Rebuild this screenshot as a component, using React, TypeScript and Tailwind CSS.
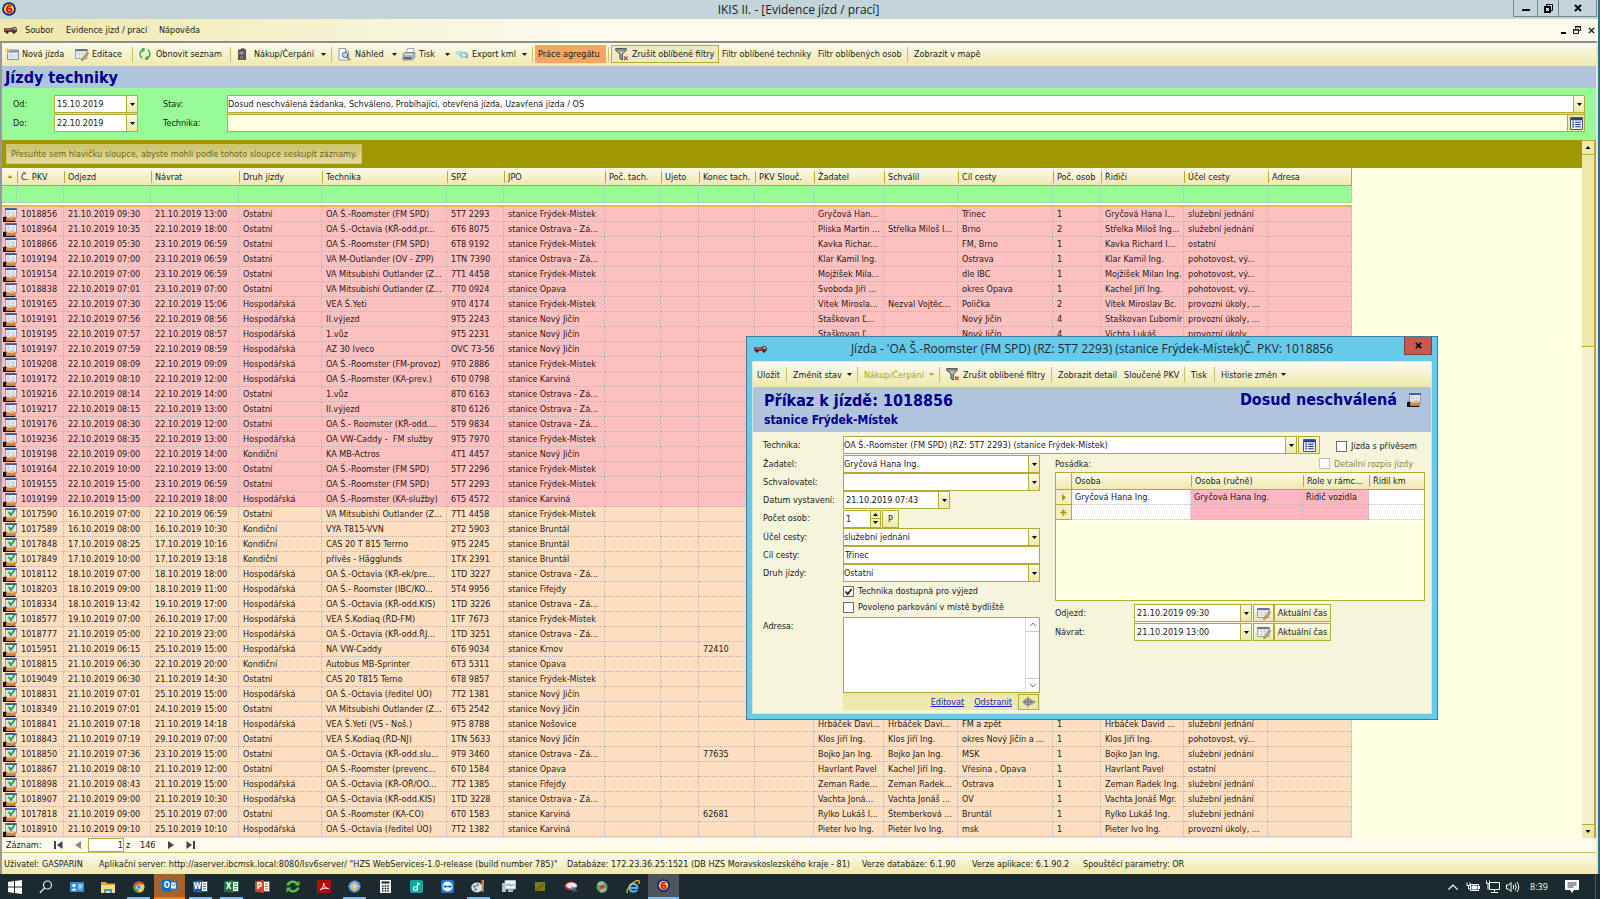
import type { ReactNode } from 'react'

type Row = string[]

const PINK_ROWS = 20

const columns = [
  { title: 'Č. PKV', width: 'w-[47px]' },
  { title: 'Odjezd', width: 'w-[87px]' },
  { title: 'Návrat', width: 'w-[88px]' },
  { title: 'Druh jízdy', width: 'w-[83px]' },
  { title: 'Technika', width: 'w-[125px]' },
  { title: 'SPZ', width: 'w-[57px]' },
  { title: 'JPO', width: 'w-[101px]' },
  { title: 'Poč. tach.', width: 'w-[56px]' },
  { title: 'Ujeto', width: 'w-[38px]' },
  { title: 'Konec tach.', width: 'w-[56px]' },
  { title: 'PKV Slouč.', width: 'w-[59px]' },
  { title: 'Žadatel', width: 'w-[70px]' },
  { title: 'Schválil', width: 'w-[74px]' },
  { title: 'Cíl cesty', width: 'w-[95px]' },
  { title: 'Poč. osob', width: 'w-[48px]' },
  { title: 'Řidiči', width: 'w-[83px]' },
  { title: 'Účel cesty', width: 'w-[84px]' },
  { title: 'Adresa', width: 'w-[84px]' },
]

// pkv, odjezd, návrat, druh, technika, spz, jpo, konec tach., žadatel, schválil, cíl, osob, řidiči, účel
const rows: Row[] = [
  ['1018856', '21.10.2019 09:30', '21.10.2019 13:00', 'Ostatní', 'OA Š.-Roomster (FM SPD)', '5T7 2293', 'stanice Frýdek-Místek', '', 'Gryčová Han...', '', 'Třinec', '1', 'Gryčová Hana I...', 'služební jednání'],
  ['1018964', '21.10.2019 10:35', '22.10.2019 18:00', 'Ostatní', 'OA Š.-Octavia (KŘ-odd.pr...', '6T6 8075', 'stanice Ostrava - Zá...', '', 'Pliska Martin ...', 'Střelka Miloš I...', 'Brno', '2', 'Střelka Miloš Ing...', 'služební jednání'],
  ['1018866', '22.10.2019 05:30', '23.10.2019 06:59', 'Ostatní', 'OA Š.-Roomster (FM SPD)', '6T8 9192', 'stanice Frýdek-Místek', '', 'Kavka Richar...', '', 'FM, Brno', '1', 'Kavka Richard I...', 'ostatní'],
  ['1019194', '22.10.2019 07:00', '23.10.2019 06:59', 'Ostatní', 'VA M-Outlander (OV - ZPP)', '1TN 7390', 'stanice Ostrava - Zá...', '', 'Klar Kamil Ing.', '', 'Ostrava', '1', 'Klar Kamil Ing.', 'pohotovost, vý...'],
  ['1019154', '22.10.2019 07:00', '23.10.2019 06:59', 'Ostatní', 'VA Mitsubishi Outlander (Z...', '7T1 4458', 'stanice Frýdek-Místek', '', 'Mojžíšek Mila...', '', 'dle IBC', '1', 'Mojžíšek Milan Ing.', 'pohotovost, vý...'],
  ['1018838', '22.10.2019 07:01', '23.10.2019 07:00', 'Ostatní', 'VA Mitsubishi Outlander (Z...', '7T0 0924', 'stanice Opava', '', 'Svoboda Jiří ...', '', 'okres Opava', '1', 'Kachel Jiří Ing.', 'pohotovost, vý...'],
  ['1019165', '22.10.2019 07:30', '22.10.2019 15:06', 'Hospodářská', 'VEA Š.Yeti', '9T0 4174', 'stanice Frýdek-Místek', '', 'Vítek Mirosla...', 'Nezval Vojtěc...', 'Polička', '2', 'Vítek Miroslav Bc.', 'provozní úkoly, ...'],
  ['1019191', '22.10.2019 07:56', '22.10.2019 08:56', 'Hospodářská', 'II.výjezd', '9T5 2243', 'stanice Nový Jičín', '', 'Staškovan Ľ...', '', 'Nový Jičín', '4', 'Staškovan Ľubomír', 'provozní úkoly, ...'],
  ['1019195', '22.10.2019 07:57', '22.10.2019 08:57', 'Hospodářská', '1.vůz', '9T5 2231', 'stanice Nový Jičín', '', 'Staškovan Ľ...', '', 'Nový Jičín', '4', 'Vichta Lukáš', 'provozní úkoly, ...'],
  ['1019197', '22.10.2019 07:59', '22.10.2019 08:59', 'Hospodářská', 'AZ 30 Iveco', 'OVC 73-56', 'stanice Nový Jičín'],
  ['1019208', '22.10.2019 08:09', '22.10.2019 09:09', 'Hospodářská', 'OA Š.-Roomster (FM-provoz)', '9T0 2886', 'stanice Frýdek-Místek'],
  ['1019172', '22.10.2019 08:10', '22.10.2019 12:00', 'Hospodářská', 'OA Š.-Roomster (KA-prev.)', '6T0 0798', 'stanice Karviná'],
  ['1019216', '22.10.2019 08:14', '22.10.2019 14:00', 'Ostatní', '1.vůz', '8T0 6163', 'stanice Ostrava - Zá...'],
  ['1019217', '22.10.2019 08:15', '22.10.2019 13:00', 'Ostatní', 'II.výjezd', '8T0 6126', 'stanice Ostrava - Zá...'],
  ['1019176', '22.10.2019 08:30', '22.10.2019 12:00', 'Ostatní', 'OA Š.- Roomster (KŘ-odd....', '5T9 9834', 'stanice Ostrava - Zá...'],
  ['1019236', '22.10.2019 08:35', '22.10.2019 13:00', 'Hospodářská', 'OA VW-Caddy -  FM služby', '9T5 7970', 'stanice Frýdek-Místek'],
  ['1019198', '22.10.2019 09:00', '22.10.2019 14:00', 'Kondiční', 'KA MB-Actros', '4T1 4457', 'stanice Nový Jičín'],
  ['1019164', '22.10.2019 10:00', '22.10.2019 13:00', 'Ostatní', 'OA Š.-Roomster (FM SPD)', '5T7 2296', 'stanice Frýdek-Místek'],
  ['1019155', '22.10.2019 15:00', '23.10.2019 06:59', 'Ostatní', 'OA Š.-Roomster (FM SPD)', '5T7 2293', 'stanice Frýdek-Místek'],
  ['1019199', '22.10.2019 15:00', '22.10.2019 18:00', 'Hospodářská', 'OA Š.-Roomster (KA-služby)', '6T5 4572', 'stanice Karviná'],
  ['1017590', '16.10.2019 07:00', '22.10.2019 06:59', 'Ostatní', 'VA Mitsubishi Outlander (Z...', '7T1 4458', 'stanice Frýdek-Místek'],
  ['1017589', '16.10.2019 08:00', '16.10.2019 10:30', 'Kondiční', 'VYA T815-VVN', '2T2 5903', 'stanice Bruntál'],
  ['1017848', '17.10.2019 08:25', '17.10.2019 10:16', 'Kondiční', 'CAS 20 T 815 Terrno', '9T5 2245', 'stanice Bruntál'],
  ['1017849', '17.10.2019 10:00', '17.10.2019 13:18', 'Kondiční', 'přívěs - Hägglunds', '1TX 2391', 'stanice Bruntál'],
  ['1018112', '18.10.2019 07:00', '18.10.2019 18:00', 'Hospodářská', 'OA Š.-Octavia (KŘ-ek/pre...', '1TD 3227', 'stanice Ostrava - Zá...'],
  ['1018203', '18.10.2019 09:00', '18.10.2019 11:00', 'Hospodářská', 'OA Š.- Roomster (IBC/KO...', '5T4 9956', 'stanice Fifejdy'],
  ['1018334', '18.10.2019 13:42', '19.10.2019 17:00', 'Hospodářská', 'OA Š.-Octavia (KŘ-odd.KIS)', '1TD 3226', 'stanice Ostrava - Zá...'],
  ['1018577', '19.10.2019 07:00', '26.10.2019 17:00', 'Hospodářská', 'VEA Š.Kodiaq (ŘD-FM)', '1TF 7673', 'stanice Frýdek-Místek'],
  ['1018777', '21.10.2019 05:00', '22.10.2019 23:00', 'Hospodářská', 'OA Š.-Octavia (KŘ-odd.ŘJ...', '1TD 3251', 'stanice Ostrava - Zá...'],
  ['1015951', '21.10.2019 06:15', '25.10.2019 15:00', 'Hospodářská', 'NA VW-Caddy', '6T6 9034', 'stanice Krnov', '72410'],
  ['1018815', '21.10.2019 06:30', '22.10.2019 20:00', 'Kondiční', 'Autobus MB-Sprinter', '6T3 5311', 'stanice Opava'],
  ['1019049', '21.10.2019 06:30', '21.10.2019 14:30', 'Ostatní', 'CAS 20 T815 Terno', '6T8 9857', 'stanice Frýdek-Místek'],
  ['1018831', '21.10.2019 07:01', '25.10.2019 15:00', 'Hospodářská', 'OA Š.-Octavia (ředitel ÚO)', '7T2 1381', 'stanice Nový Jičín'],
  ['1018349', '21.10.2019 07:01', '24.10.2019 15:00', 'Ostatní', 'VA Mitsubishi Outlander (Z...', '6T5 2542', 'stanice Nový Jičín'],
  ['1018841', '21.10.2019 07:18', '21.10.2019 14:18', 'Hospodářská', 'VEA Š.Yeti (VS - Noš.)', '9T5 8788', 'stanice Nošovice', '', 'Hrbáček Davi...', 'Hrbáček Davi...', 'FM a zpět', '1', 'Hrbáček David ...', 'služební jednání'],
  ['1018843', '21.10.2019 07:19', '29.10.2019 07:00', 'Ostatní', 'VEA Š.Kodiaq (ŘD-NJ)', '1TN 5633', 'stanice Nový Jičín', '', 'Klos Jiří Ing.', 'Klos Jiří Ing.', 'okres Nový Jičín a ...', '1', 'Klos Jiří Ing.', 'pohotovost, vý...'],
  ['1018850', '21.10.2019 07:36', '23.10.2019 15:00', 'Ostatní', 'OA Š.-Octavia (KŘ-odd.slu...', '9T9 3460', 'stanice Ostrava - Zá...', '77635', 'Bojko Jan Ing.', 'Bojko Jan Ing.', 'MSK', '1', 'Bojko Jan Ing.', 'služební jednání'],
  ['1018867', '21.10.2019 08:10', '21.10.2019 12:00', 'Ostatní', 'OA Š.-Roomster (prevenc...', '6T0 1584', 'stanice Opava', '', 'Havrlant Pavel', 'Kachel Jiří Ing.', 'Vřesina , Opava', '1', 'Havrlant Pavel', 'ostatní'],
  ['1018898', '21.10.2019 08:43', '21.10.2019 15:00', 'Hospodářská', 'OA Š.-Octavia (KŘ-OŘ/OO...', '7T2 1385', 'stanice Fifejdy', '', 'Zeman Rade...', 'Zeman Radek...', 'Ostrava', '1', 'Zeman Radek Ing.', 'služební jednání'],
  ['1018907', '21.10.2019 09:00', '21.10.2019 10:30', 'Hospodářská', 'OA Š.-Octavia (KŘ-odd.KIS)', '1TD 3228', 'stanice Ostrava - Zá...', '', 'Vachta Joná...', 'Vachta Jonáš ...', 'OV', '1', 'Vachta Jonáš Mgr.', 'služební jednání'],
  ['1017818', '21.10.2019 09:00', '25.10.2019 07:00', 'Ostatní', 'OA Š.-Roomster (KA-CO)', '6T0 1583', 'stanice Karviná', '62681', 'Rylko Lukáš I...', 'Štemberková ...', 'Bruntál', '1', 'Rylko Lukáš Ing.', 'služební jednání'],
  ['1018910', '21.10.2019 09:10', '25.10.2019 10:10', 'Hospodářská', 'OA Š.-Octavia (ředitel ÚO)', '7T2 1382', 'stanice Karviná', '', 'Pieter Ivo Ing.', 'Pieter Ivo Ing.', 'msk', '1', 'Pieter Ivo Ing.', 'provozní úkoly, ...'],
]

// the grid shows four columns (tach., ujeto, sloučení, adresa) that are always empty
function toCells(row: Row) {
  const v = (i: number) => row[i] ?? ''
  return [v(0), v(1), v(2), v(3), v(4), v(5), v(6), '', '', v(7), '', v(8), v(9), v(10), v(11), v(12), v(13), '']
}

/* ---------- icons ---------- */

function LogoIcon({ className = 'size-[14px]' }: { className?: string }) {
  return (
    <svg viewBox="0 0 14 14" className={className}>
      <circle cx="7" cy="7" r="6.8" fill="#10208a" />
      <circle cx="7" cy="7" r="5" fill="#ffe11a" />
      <path d="M9.200 4.200C7 2.800 4.800 4 4.800 7.200C4.800 11.200 9.500 10.800 9.400 8.300C9.300 6.100 6 6 5.200 8" fill="none" stroke="#d8171c" strokeWidth="2" />
    </svg>
  )
}

function TruckIcon() {
  return (
    <svg viewBox="0 0 13 8" className="h-2 w-[13px]">
      <path d="M0 2h8l1-1h3l1 2v3H0z" fill="#6d4547" />
      <path d="M1 2.500h6v1.500H1z" fill="#b2666a" />
      <path d="M9.500 2h2.200v1.500H9.500z" fill="#c8d0d4" />
      <circle cx="3" cy="6.300" r="1.400" fill="#2b2325" />
      <circle cx="10" cy="6.300" r="1.400" fill="#2b2325" />
    </svg>
  )
}

function RowIcon({ checked }: { checked?: boolean }) {
  return (
    <svg viewBox="0 0 14 14" className="size-[14px]">
      <path d="M2.500 .5h11v9.500h-11z" fill="#eceff3" stroke="#7f8898" strokeWidth=".8" />
      <path d="M2.200 .2h11.500v1.800H2.200z" fill="#39599f" />
      <path d="M4 2.500h3v6H4z" fill="#d3d9e4" />
      <path d="M8 4h4M8 5.700h4M8 7.400h4" stroke="#b9bfcb" strokeWidth=".7" />
      {checked && <path d="M5.800 3.800l2 3.200 4-5.500" fill="none" stroke="#17a52c" strokeWidth="1.800" />}
      <path d="M0 9l3.500-.5v4H13l-1 1.500H0z" fill="#12151c" />
      <path d="M3 10.500L8 8.300l5.500.7-1.500 3.200-3 .5H3z" fill="#d9843a" />
      <path d="M4 9.800l4-1 4.500.5-4 1z" fill="#f3bd85" />
    </svg>
  )
}

function NewIcon() {
  return (
    <svg viewBox="0 0 14 12" className="h-3 w-[14px]">
      <path d="M2.500 2h11v9.500h-11z" fill="#f6f8fa" stroke="#7f8da5" />
      <path d="M3 2.500h10v2H3z" fill="#6b86b8" />
      <path d="M6 4.500v7M3 7h10M3 9h10" stroke="#b7c2d3" strokeWidth=".8" />
      <path d="M2.500 0v5.500M0 2.700h5.500M.7.800l3.800 3.800M4.500.800L.700 4.600" stroke="#f0c344" strokeWidth=".9" />
    </svg>
  )
}

function EditIcon() {
  return (
    <svg viewBox="0 0 14 13" className="h-[13px] w-[14px]">
      <path d="M.5 1.500h11.500v9H.5z" fill="#f5f6f8" stroke="#9a9dae" />
      <path d="M.5 1h12v2.200H.5z" fill="#6f7190" />
      <path d="M1 5.500h11M1 8h11M4.500 3v7.500M8 3v7.500" stroke="#c3c6d0" strokeWidth=".7" />
      <path d="M12.500 4l1.200 1-5.200 7-2 .8.500-2z" fill="#d9b45a" stroke="#6e603b" strokeWidth=".6" />
    </svg>
  )
}

function RefreshIcon() {
  return (
    <svg viewBox="0 0 12 12" className="size-3" fill="none" stroke="#2fa84a" strokeWidth="1.500">
      <path d="M4.500 1.500C1.500 3 .800 5 1.200 7.200c.3 1.300 1 2.200 2.200 2.900M7.500 10.500C10.500 9 11.200 7 10.800 4.800c-.3-1.300-1-2.200-2.200-2.900" />
      <path d="M3 .5l2.200.8-1 2.200M9 11.500l-2.200-.8 1-2.200" />
    </svg>
  )
}

function PumpIcon() {
  return (
    <svg viewBox="0 0 10 13" className="h-[13px] w-[10px]">
      <path d="M1 2l5-2 3 1.500V12H1z" fill="#5a5654" />
      <path d="M2.500 3.500h4v3h-4z" fill="#9b9896" />
      <path d="M3 8l3 3M6 8l-3 3" stroke="#b98" strokeWidth=".8" />
      <circle cx="7.500" cy="2" r="1" fill="#b53b35" />
    </svg>
  )
}

function PreviewIcon() {
  return (
    <svg viewBox="0 0 13 13" className="size-[13px]">
      <path d="M1 .5h6.500l3 3V12H1z" fill="#fbfcfd" stroke="#8791a3" strokeWidth=".9" />
      <path d="M7.500.5v3h3" fill="#d8dfea" stroke="#8791a3" strokeWidth=".7" />
      <circle cx="7" cy="7" r="2.700" fill="#b9dcf2" stroke="#4a7196" />
      <path d="M9 9l3 3.200" stroke="#a0733e" strokeWidth="1.600" />
    </svg>
  )
}

function PrinterIcon() {
  return (
    <svg viewBox="0 0 14 13" className="h-[13px] w-[14px]">
      <path d="M4 5l1.500-4.500H12L10.500 5z" fill="#fff" stroke="#8a96a8" strokeWidth=".8" />
      <path d="M1 6l2.500-1.500H13L12.500 10 10 12H1z" fill="#a9b3bf" stroke="#6d7885" strokeWidth=".7" />
      <path d="M2 9h7.500v2H2z" fill="#5d6772" />
      <path d="M2.500 6.500h8" stroke="#eef1f4" />
    </svg>
  )
}

function EarthIcon() {
  return (
    <svg viewBox="0 0 14 10" className="h-[10px] w-[14px]">
      <ellipse cx="4.500" cy="4" rx="4.200" ry="2.600" fill="#b9e2e8" />
      <ellipse cx="9" cy="6" rx="4.200" ry="2.900" fill="#79c3dc" />
      <path d="M6 5q3-2 5 1t-3 2z" fill="#d9f1ea" />
      <path d="M10 7.500l3 1" stroke="#b77f76" strokeWidth="1.200" />
    </svg>
  )
}

function FunnelIcon() {
  return (
    <svg viewBox="0 0 14 13" className="h-[13px] w-[14px]">
      <path d="M.7.700h10.600v1.500L7.300 6v6L5 10.500V6L.700 2.200z" fill="#b9bcc0" stroke="#3b3b3b" strokeWidth="1" />
      <path d="M2 2.200h8" stroke="#4d4d4d" strokeWidth=".7" />
      <path d="M9 8.500l3.500 3.500M12.500 8.500L9 12" stroke="#b8402f" strokeWidth="1.100" />
    </svg>
  )
}

function ListIcon() {
  return (
    <svg viewBox="0 0 13 13" className="size-[13px]">
      <path d="M.5.500h12v12H.5z" fill="#eaf0fb" stroke="#4d5668" />
      <path d="M1 1h11v2.300H1z" fill="#24449b" />
      <path d="M2.300 5.200h1.700M2.300 7.500h1.700M2.300 9.800h1.700" stroke="#1b2f7d" strokeWidth="1.300" />
      <path d="M5.200 5.200h5.500M5.200 7.500h5.500M5.200 9.800h5.500" stroke="#1b2f7d" strokeWidth="1.100" />
    </svg>
  )
}

function TargetIcon() {
  return (
    <svg viewBox="0 0 14 12" className="h-3 w-[14px]">
      <path d="M0 6l3-3h6l5 3-4 3H3z" fill="#b3b3b3" />
      <circle cx="6" cy="6" r="3.300" fill="none" stroke="#7d7d7d" />
      <path d="M6 .8v10.400M1 6h12" stroke="#666" strokeWidth=".9" />
    </svg>
  )
}

function Triangle({ className = 'h-[3px] w-[5px] text-black' }: { className?: string }) {
  return (
    <svg viewBox="0 0 10 6" className={className}>
      <path d="M0 0h10L5 6z" fill="currentColor" />
    </svg>
  )
}

function TriangleUp({ className = 'h-[3px] w-[5px] text-black' }: { className?: string }) {
  return (
    <svg viewBox="0 0 10 6" className={className}>
      <path d="M0 6h10L5 0z" fill="currentColor" />
    </svg>
  )
}

/* ---------- small controls ---------- */

function ToolButton({ icon, children, className = '', arrow }: { icon?: ReactNode; children: ReactNode; className?: string; arrow?: boolean }) {
  return (
    <button className={`flex h-[18px] shrink-0 items-center whitespace-nowrap text-left ${className}`}>
      {icon && <span className="flex w-[17px] shrink-0 items-center">{icon}</span>}
      <span className="flex-1">{children}</span>
      {arrow && <Triangle className="mr-[5px] h-[3px] w-[5px]" />}
    </button>
  )
}

function Sep() {
  return <span className="mr-[6px] h-[15px] w-px shrink-0 bg-[#c9bf62]" />
}

function ArrowButton({ label }: { label: string }) {
  return (
    <button type="button" aria-label={label} className="flex w-[11px] shrink-0 items-center justify-center border-l border-[#b5ab33] bg-linear-to-b from-[#fbfae8] to-[#eee8aa]">
      <Triangle />
    </button>
  )
}

function DateField({ id, value, className }: { id: string; value: string; className: string }) {
  return (
    <div className={`flex h-[18px] border border-[#b5ab33] bg-white ${className}`}>
      <input id={id} defaultValue={value} className="min-w-0 flex-1 px-[2px] text-[9px] outline-none" />
      <ArrowButton label="Otevřít kalendář" />
    </div>
  )
}

function Combo({ id, value, className = '' }: { id: string; value: string; className?: string }) {
  return (
    <div className={`relative flex h-[18px] border border-[#b5ab33] bg-white ${className}`}>
      <select id={id} className="min-w-0 flex-1 appearance-none text-[9px] leading-[14px] outline-none">
        <option>{value}</option>
      </select>
      <span className="pointer-events-none absolute inset-y-0 right-0 flex w-[11px] items-center justify-center border-l border-[#b5ab33] bg-linear-to-b from-[#fbfae8] to-[#eee8aa]">
        <Triangle />
      </span>
    </div>
  )
}

function CheckBox({ id, label, checked, disabled, className = '' }: { id: string; label: string; checked?: boolean; disabled?: boolean; className?: string }) {
  return (
    <div className={`flex h-4 items-center gap-1 ${className}`}>
      <span className="relative flex size-[11px]">
        <input
          id={id}
          type="checkbox"
          defaultChecked={checked}
          disabled={disabled}
          className={`size-[11px] appearance-none border bg-white ${disabled ? 'border-[#c4c0a4]' : 'border-[#6d6d6d]'}`}
        />
        {checked && (
          <svg viewBox="0 0 11 11" className="pointer-events-none absolute inset-0" fill="none" stroke="#222" strokeWidth="1.800">
            <path d="M2.500 5.500l2.200 2.500 4-5" />
          </svg>
        )}
      </span>
      <label htmlFor={id} className={disabled ? 'text-[#8b8640]' : ''}>{label}</label>
    </div>
  )
}

/* ---------- main window ---------- */

function TitleBar() {
  return (
    <div className="flex h-[19px] shrink-0 items-start bg-[#c3d5da]">
      <span className="flex w-[84px] pt-[2px] pl-[2px]"><LogoIcon /></span>
      <h1 className="flex-1 text-center font-['Open_Sans','Noto_Sans',sans-serif] text-[12px] leading-[19px] text-[#222]">IKIS II. - [Evidence jízd / prací]</h1>
      <div className="mr-px flex h-[17px] border border-t-0 border-[#76868c]">
        <button aria-label="Minimalizovat" className="flex w-6 items-center justify-center border-r border-[#76868c]">
          <span className="mt-1 h-[2px] w-2 bg-black" />
        </button>
        <button aria-label="Obnovit" className="flex w-[21px] items-center justify-center border-r border-[#76868c]">
          <svg viewBox="0 0 9 9" className="size-[9px]" fill="none" stroke="#000"><path d="M2.500 2V.5h6v6H7" /><path d="M1 3h5v5H1z" strokeWidth="2" /></svg>
        </button>
        <button aria-label="Zavřít" className="flex w-[37px] items-center justify-center">
          <svg viewBox="0 0 8 8" className="size-2" stroke="#000" strokeWidth="2"><path d="M1 1l6 6M7 1L1 7" /></svg>
        </button>
      </div>
    </div>
  )
}

function MenuBar() {
  return (
    <nav className="flex h-[22px] shrink-0 items-center bg-linear-to-r from-[#eee8aa] to-[#fcfaec] to-35% pl-1">
      <span className="w-[21px]"><TruckIcon /></span>
      <button className="w-[41px] text-left">Soubor</button>
      <button className="w-[93px] whitespace-nowrap text-left">Evidence jízd / prací</button>
      <button className="text-left">Nápověda</button>
      <div className="ml-auto flex items-center gap-[7px] pr-[3px]">
        <button aria-label="Minimalizovat okno" className="flex h-2 items-end"><span className="h-[2px] w-[5px] bg-black" /></button>
        <button aria-label="Obnovit okno">
          <svg viewBox="0 0 8 8" className="size-2" fill="none" stroke="#111"><path d="M2.500 2.500v-2h5v4H6M2 1h6M.500 3.500h5v4h-5zM0 4h6" /></svg>
        </button>
        <button aria-label="Zavřít okno">
          <svg viewBox="0 0 8 8" className="size-[7px]" stroke="#111" strokeWidth="1.600"><path d="M1 1l6 6M7 1L1 7" /></svg>
        </button>
      </div>
    </nav>
  )
}

function Toolbar() {
  return (
    <div className="flex h-[23px] shrink-0 items-center overflow-hidden bg-linear-to-b from-[#fcfbee] to-[#eee8aa] pb-px pl-[3px]">
      <ToolButton icon={<NewIcon />} className="w-[70px]">Nová jízda</ToolButton>
      <ToolButton icon={<EditIcon />} className="w-[57px]">Editace</ToolButton>
      <Sep />
      <ToolButton icon={<RefreshIcon />} className="w-[91px]">Obnovit seznam</ToolButton>
      <Sep />
      <ToolButton icon={<PumpIcon />} className="w-[94px]" arrow>Nákup/Čerpání</ToolButton>
      <Sep />
      <ToolButton icon={<PreviewIcon />} className="w-[64px]" arrow>Náhled</ToolButton>
      <ToolButton icon={<PrinterIcon />} className="w-[53px]" arrow>Tisk</ToolButton>
      <ToolButton icon={<EarthIcon />} className="w-[77px]" arrow>Export kml</ToolButton>
      <span className="mr-[2px] h-[15px] w-px shrink-0 bg-[#c9bf62]" />
      <ToolButton className="w-[71px] bg-[#f6a562] pl-[3px]">Práce agregátu</ToolButton>
      <span className="mx-[2px] h-[15px] w-px shrink-0 bg-[#c9bf62]" />
      <ToolButton icon={<FunnelIcon />} className="w-[108px] border border-[#b5ab33] bg-[#efeac0] pl-[3px]">Zrušit oblíbené filtry</ToolButton>
      <ToolButton className="ml-[3px] w-[96px]">Filtr oblíbené techniky</ToolButton>
      <ToolButton className="w-[89px]">Filtr oblíbených osob</ToolButton>
      <Sep />
      <ToolButton>Zobrazit v mapě</ToolButton>
    </div>
  )
}

function Filters() {
  return (
    <form className="grid h-[52px] shrink-0 grid-cols-[41px_84px_25px_64px_1fr] content-start gap-y-px bg-[#98fb98] pt-[7px] pr-[11px] pl-[11px]">
      <label htmlFor="od" className="leading-[18px]">Od:</label>
      <DateField id="od" value="15.10.2019" className="w-[84px]" />
      <span />
      <label htmlFor="stav" className="leading-[18px]">Stav:</label>
      <Combo id="stav" value="Dosud neschválená žádanka, Schváleno, Probíhající, otevřená jízda, Uzavřená jízda / OS" />
      <label htmlFor="do" className="leading-[18px]">Do:</label>
      <DateField id="do" value="22.10.2019" className="w-[84px]" />
      <span />
      <label htmlFor="technika" className="leading-[18px]">Technika:</label>
      <div className="flex h-[18px] border border-[#b5ab33] bg-[#ffffe1]">
        <input id="technika" className="min-w-0 flex-1 px-[2px] text-[9px] outline-none" />
        <button type="button" aria-label="Vybrat techniku" className="flex w-[17px] items-center justify-center border-l border-[#b5ab33] bg-[#eee8aa]"><ListIcon /></button>
      </div>
    </form>
  )
}

function TripsTable() {
  return (
    <table className="w-[1350px] table-fixed border-separate border-spacing-0">
      <colgroup>
        <col className="w-[15px]" />
        {columns.map(c => <col key={c.title} className={c.width} />)}
      </colgroup>
      <thead>
        <tr className="h-[18px] bg-linear-to-b from-[#fbfae8] to-[#eee8aa]">
          <th className="border-b border-[#b5ab33]"><TriangleUp className="mx-auto h-[3px] w-[6px] text-[#a09800]" /></th>
          {columns.map(c => (
            <th key={c.title} className="overflow-hidden border-b border-[#b5ab33] p-0 text-left font-normal whitespace-nowrap last:border-r">
              <span className="block h-3 border-l border-[#b5ab33] pl-[3px] leading-3">{c.title}</span>
            </th>
          ))}
        </tr>
        <tr className="h-[17px] bg-[#98fb98]">
          <td className="border-r border-b border-dotted border-[#b9b9c4]" />
          {columns.map(c => <td key={c.title} className="border-r border-b border-dotted border-[#b9b9c4]" />)}
        </tr>
        <tr className="h-1">
          <td colSpan={19} className="border-b-2 border-[#d3bd5c] bg-[#fcfaec]" />
        </tr>
      </thead>
      <tbody>
        {rows.map((row, i) => (
          <tr key={row[0]} className={`h-[15px] ${i < PINK_ROWS ? 'bg-[#ffc0c0]' : 'bg-[#ffdfc0]'}`}>
            <td className="py-0 pr-0 pl-px"><RowIcon checked={i >= PINK_ROWS} /></td>
            {toCells(row).map((cell, n) => (
              <td key={n} className="overflow-hidden border-r border-b border-dotted border-[#b4b4c0] py-0 pr-0 pl-[4px] leading-[14px] whitespace-pre">{cell}</td>
            ))}
          </tr>
        ))}
        <tr className="h-[15px] bg-[#ffdfc0]"><td colSpan={19} /></tr>
      </tbody>
    </table>
  )
}

function Grid() {
  return (
    <div className="flex min-h-0 flex-1 bg-[#ffffe1]">
      <div className="flex min-w-0 flex-1 flex-col overflow-hidden">
        <div className="flex h-7 shrink-0 items-center bg-[#a09800] pl-1">
          <span className="h-5 border border-[#cfc878] bg-linear-to-b from-[#ccc468] to-[#e4dda0] px-1 leading-[18px] whitespace-nowrap text-[#69651c]">Přesuňte sem hlavičku sloupce, abyste mohli podle tohoto sloupce seskupit záznamy.</span>
        </div>
        <div className="min-h-0 flex-1 overflow-hidden"><TripsTable /></div>
      </div>
      <div className="flex w-[14px] shrink-0 flex-col border-r-2 border-[#b5ab33] bg-[#f5f1d0]">
        <button aria-label="Nahoru" className="flex h-[15px] items-center justify-center border-y border-[#b5ab33] bg-[#efe9b4]"><TriangleUp className="h-[3px] w-[6px] text-black" /></button>
        <span className="h-[192px] border-b border-[#b5ab33] bg-[#eee8aa]" />
        <span className="flex-1" />
        <button aria-label="Dolů" className="flex h-[14px] items-center justify-center border-t border-[#b5ab33] bg-[#eee8aa]"><Triangle className="h-[3px] w-[6px] text-black" /></button>
      </div>
    </div>
  )
}

function Navigator() {
  return (
    <div className="flex h-[15px] shrink-0 items-center border-b border-[#c8bf5c] bg-[#fcfaec] pb-px pl-1">
      <label htmlFor="zaznam" className="w-12">Záznam:</label>
      <button aria-label="První" className="flex w-[21px]"><svg viewBox="0 0 9 8" className="h-2 w-[9px]" fill="#444"><path d="M0 0h2v8H0zM8.500 0v8L3 4z" /></svg></button>
      <button aria-label="Předchozí" className="flex w-[13px]"><svg viewBox="0 0 6 8" className="h-2 w-[6px]" fill="#888"><path d="M6 0v8L0 4z" /></svg></button>
      <input id="zaznam" defaultValue="1" className="h-[14px] w-9 border border-[#b5ab33] bg-white text-right text-[9px] outline-none" />
      <span className="ml-[2px] w-[14px]">z</span>
      <span className="w-7">146</span>
      <button aria-label="Další" className="flex w-[18px]"><svg viewBox="0 0 6 8" className="h-2 w-[6px]" fill="#444"><path d="M0 0v8l6-4z" /></svg></button>
      <button aria-label="Poslední"><svg viewBox="0 0 9 8" className="h-2 w-[9px]" fill="#444"><path d="M.500 0v8L6 4zM7 0h2v8H7z" /></svg></button>
    </div>
  )
}

function StatusBar() {
  return (
    <footer className="flex h-[21px] shrink-0 items-center overflow-hidden bg-linear-to-b from-[#fcfaec] to-[#eee8aa] pt-px pl-[2px] whitespace-nowrap">
      <span className="w-[95px] shrink-0">Uživatel: GASPARIN</span>
      <span className="w-[468px] shrink-0">Aplikační server: http://aserver.ibcmsk.local:8080/Isv6server/ "HZS WebServices-1.0-release (build number 785)"</span>
      <span className="w-[295px] shrink-0">Databáze: 172.23.36.25:1521 (DB HZS Moravskoslezského kraje - 81)</span>
      <span className="w-[110px] shrink-0">Verze databáze: 6.1.90</span>
      <span className="w-[111px] shrink-0">Verze aplikace: 6.1.90.2</span>
      <span>Spouštěcí parametry: OR</span>
    </footer>
  )
}

/* ---------- trip dialog ---------- */

function CrewTable() {
  return (
    <div className="h-[129px] w-[370px] border border-[#b5ab33] bg-[#ffffe1]">
      <table className="w-full table-fixed border-separate border-spacing-0">
        <colgroup>
          <col className="w-4" />
          <col className="w-[119px]" />
          <col className="w-[112px]" />
          <col className="w-[66px]" />
          <col />
        </colgroup>
        <thead>
          <tr className="h-[17px] bg-linear-to-b from-[#fbfae8] to-[#eee8aa]">
            <th className="border-r border-b border-[#b5ab33]" />
            {['Osoba', 'Osoba (ručně)', 'Role v rámc...', 'Řídil km'].map((t, i) => (
              <th key={t} className="border-b border-[#b5ab33] p-0 text-left font-normal whitespace-nowrap">
                <span className={`block h-3 pl-[3px] leading-3 ${i > 0 ? 'border-l border-[#b5ab33]' : ''}`}>{t}</span>
              </th>
            ))}
          </tr>
        </thead>
        <tbody>
          <tr className="h-[15px] bg-white leading-[14px]">
            <td className="border-r border-b border-[#b5ab33] bg-[#f3efc4] p-0">
              <svg viewBox="0 0 4 7" className="mx-auto h-[7px] w-1" fill="#a09800"><path d="M0 0v7l4-3.500z" /></svg>
            </td>
            <td className="border-r border-b border-dotted border-[#bbb] py-0 pr-0 pl-[3px]">Gryčová Hana Ing.</td>
            <td className="border-r border-b border-dotted border-[#bbb] bg-[#ffb6c1] py-0 pr-0 pl-[3px]">Gryčová Hana Ing.</td>
            <td className="border-r border-b border-dotted border-[#bbb] bg-[#ffb6c1] py-0 pr-0 pl-[3px]">Řidič vozidla</td>
            <td className="border-b border-dotted border-[#bbb]" />
          </tr>
          <tr className="h-[15px] bg-white">
            <td className="border-r border-b border-[#b5ab33] bg-[#f3efc4] p-0">
              <svg viewBox="0 0 7 7" className="mx-auto size-[7px]" stroke="#a09800"><path d="M3.500 0v7M0 3.500h7M1.200 1.200l4.600 4.600M5.800 1.200L1.200 5.800" strokeWidth=".9" /></svg>
            </td>
            <td className="border-r border-b border-dotted border-[#bbb]" />
            <td className="border-r border-b border-dotted border-[#bbb] bg-[#ffb6c1]" />
            <td className="border-r border-b border-dotted border-[#bbb] bg-[#ffb6c1]" />
            <td className="border-b border-dotted border-[#bbb]" />
          </tr>
        </tbody>
      </table>
    </div>
  )
}

function TimeRow({ id, label, value }: { id: string; label: string; value: string }) {
  return (
    <div className="flex h-[18px] items-center">
      <label htmlFor={id} className="w-[79px]">{label}</label>
      <DateField id={id} value={value} className="w-[118px]" />
      <button type="button" aria-label={`Upravit ${label}`} className="ml-px flex h-[18px] w-[21px] items-center justify-center border border-[#b5ab33] bg-linear-to-b from-[#fbfae8] to-[#eee8aa]"><EditIcon /></button>
      <button type="button" className="h-[18px] w-[57px] border border-[#b5ab33] bg-linear-to-b from-[#fbfae8] to-[#eee8aa] whitespace-nowrap">Aktuální čas</button>
    </div>
  )
}

function TripForm() {
  return (
    <form className="flex px-[10px] pt-1">
      <div className="w-[292px] shrink-0">
        <div className="grid grid-cols-[80px_197px] items-center gap-y-px leading-[17px]">
          <label htmlFor="m-technika">Technika:</label>
          <div className="flex h-[18px] w-[480px]">
            <Combo id="m-technika" value="OA Š.-Roomster (FM SPD) (RZ: 5T7 2293) (stanice Frýdek-Místek)" className="w-[454px]" />
            <button type="button" aria-label="Vybrat" className="ml-px flex w-[22px] items-center justify-center border border-[#b5ab33] bg-linear-to-b from-[#fbfae8] to-[#eee8aa]"><ListIcon /></button>
          </div>
          <label htmlFor="m-zadatel">Žadatel:</label>
          <Combo id="m-zadatel" value="Gryčová Hana Ing." />
        </div>
        <div className="grid grid-cols-[80px_197px] items-center leading-[17px]">
          <label htmlFor="m-schval">Schvalovatel:</label>
          <Combo id="m-schval" value="" />
          <label htmlFor="m-datum" className="whitespace-nowrap">Datum vystavení:</label>
          <DateField id="m-datum" value="21.10.2019 07:43" className="w-[107px]" />
          <label htmlFor="m-pocet">Počet osob:</label>
          <div className="flex h-[19px] items-center">
            <input id="m-pocet" defaultValue="1" className="h-[18px] w-[28px] border border-[#b5ab33] bg-white px-[2px] text-[9px] outline-none" />
            <span className="flex h-[18px] w-[10px] flex-col border border-l-0 border-[#b5ab33] bg-[#f3efc4]">
              <button type="button" aria-label="Více" className="flex flex-1 items-center justify-center border-b border-[#b5ab33]"><TriangleUp /></button>
              <button type="button" aria-label="Méně" className="flex flex-1 items-center justify-center"><Triangle /></button>
            </span>
            <button type="button" className="ml-px h-[18px] w-[17px] border border-[#b5ab33] bg-linear-to-b from-[#fbfae8] to-[#eee8aa] leading-4">P</button>
          </div>
          <label htmlFor="m-ucel">Účel cesty:</label>
          <Combo id="m-ucel" value="služební jednání" />
          <label htmlFor="m-cil">Cíl cesty:</label>
          <input id="m-cil" defaultValue="Třinec" className="h-[18px] border border-[#b5ab33] bg-white px-px text-[9px] outline-none" />
          <label htmlFor="m-druh">Druh jízdy:</label>
          <Combo id="m-druh" value="Ostatní" />
        </div>
        <CheckBox id="m-dostupna" label="Technika dostupná pro výjezd" checked className="mt-px ml-20" />
        <CheckBox id="m-parkovani" label="Povoleno parkování v místě bydliště" className="ml-20 whitespace-nowrap" />
        <div className="mt-[2px] flex">
          <label htmlFor="m-adresa" className="w-20 pt-[3px]">Adresa:</label>
          <div className="w-[197px]">
            <div className="flex h-[76px] border border-[#b5ab33] bg-white">
              <textarea id="m-adresa" className="min-w-0 flex-1 resize-none text-[9px] outline-none" />
              <span className="flex w-[14px] flex-col justify-between border-l border-[#ddd] bg-white">
                <button type="button" aria-label="Nahoru" className="flex h-[14px] items-center justify-center border-b border-[#ccc]"><svg viewBox="0 0 8 5" className="h-[5px] w-2" fill="none" stroke="#777"><path d="M1 4.500L4 1l3 3.500" /></svg></button>
                <button type="button" aria-label="Dolů" className="flex h-[14px] items-center justify-center border-t border-[#ccc]"><svg viewBox="0 0 8 5" className="h-[5px] w-2" fill="none" stroke="#777"><path d="M1 .5L4 4l3-3.500" /></svg></button>
              </span>
            </div>
            <div className="flex h-[17px] items-center justify-end gap-[10px] bg-[#eee8aa] pr-px text-[#2020d0]">
              <a href="#" className="underline">Editovat</a>
              <a href="#" className="underline">Odstranit</a>
              <button type="button" aria-label="Najít na mapě" className="-ml-1 flex h-4 w-[21px] items-center justify-center border border-[#b5ab33]"><TargetIcon /></button>
            </div>
          </div>
        </div>
      </div>
      <div className="w-[370px] shrink-0">
        <div className="flex h-[19px] justify-end pt-[2px]">
          <CheckBox id="m-prives" label="Jízda s přívěsem" className="mr-2 whitespace-nowrap" />
        </div>
        <div className="flex h-[17px] items-center justify-between">
          <span>Posádka:</span>
          <CheckBox id="m-rozpis" label="Detailní rozpis jízdy" disabled className="mr-3 whitespace-nowrap" />
        </div>
        <CrewTable />
        <div className="mt-[3px] flex flex-col gap-px">
          <TimeRow id="m-odjezd" label="Odjezd:" value="21.10.2019 09:30" />
          <TimeRow id="m-navrat" label="Návrat:" value="21.10.2019 13:00" />
        </div>
      </div>
    </form>
  )
}

function TripDialog() {
  return (
    <section role="dialog" aria-label="Jízda" className="absolute top-[336px] left-[746px] flex h-[384px] w-[692px] flex-col border border-[#3c7f98] bg-[#66caea] px-[5px] pb-[5px]">
      <div className="flex h-6 items-start">
        <span className="w-[28px] pt-2 pl-[2px]"><TruckIcon /></span>
        <h2 className="flex-1 text-center font-['Open_Sans','Noto_Sans',sans-serif] text-[12px] leading-[23px] whitespace-nowrap text-[#1c2a30]">Jízda - 'OA Š.-Roomster (FM SPD) (RZ: 5T7 2293) (stanice Frýdek-Místek)Č. PKV: 1018856</h2>
        <button aria-label="Zavřít" className="flex h-[18px] w-7 items-center justify-center border border-t-0 border-[#8c3a34] bg-[#c75a50]">
          <svg viewBox="0 0 8 8" className="size-[7px]" stroke="#000" strokeWidth="2"><path d="M1 1l6 6M7 1L1 7" /></svg>
        </button>
      </div>
      <div className="flex-1 border border-[#d9e8d8] bg-[#f5f5dc]">
        <div className="flex h-[25px] items-center bg-linear-to-b from-[#fcfbee] to-[#eee8aa] pl-1">
          <ToolButton className="w-[29px]">Uložit</ToolButton>
          <Sep />
          <ToolButton className="w-[64px]" arrow>Změnit stav</ToolButton>
          <Sep />
          <ToolButton className="w-[75px] text-[#aba32c]" arrow>Nákup/Čerpání</ToolButton>
          <Sep />
          <ToolButton icon={<FunnelIcon />} className="w-[105px]">Zrušit oblíbené filtry</ToolButton>
          <Sep />
          <ToolButton className="w-[66px]">Zobrazit detail</ToolButton>
          <ToolButton className="w-[60px]">Sloučené PKV</ToolButton>
          <Sep />
          <ToolButton className="w-[23px]">Tisk</ToolButton>
          <Sep />
          <ToolButton className="w-[70px]" arrow>Historie změn</ToolButton>
        </div>
        <div className="flex h-[45px] justify-between bg-[#b0c4de] pr-[10px] pl-[11px] font-bold text-[#00008b]">
          <div>
            <h3 className="pt-1 text-[16px] leading-[20px]">Příkaz k jízdě: 1018856</h3>
            <p className="text-[12px] leading-[18px]">stanice Frýdek-Místek</p>
          </div>
          <div className="flex h-[25px] items-center gap-[10px]">
            <span className="text-[16px] leading-[20px]">Dosud neschválená</span>
            <RowIcon />
          </div>
        </div>
        <TripForm />
      </div>
    </section>
  )
}

/* ---------- taskbar ---------- */

function Tile({ fill, letter }: { fill: string; letter: string }) {
  return (
    <span className="relative flex h-[13px] w-[15px]">
      <svg viewBox="0 0 15 13" className="absolute inset-0">
        <path d="M7 1.500h7.500v10H7z" fill="#fff" stroke={fill} />
        <path d="M10 4h3M10 6.500h3M10 9h3" stroke={fill} />
        <path d="M0 1.200L9 0v13L0 11.800z" fill={fill} />
      </svg>
      <span className="relative w-[9px] text-center text-[8px] leading-[13px] font-bold text-white">{letter}</span>
    </span>
  )
}

const tasks: { name: string; icon: ReactNode; open?: boolean; className?: string }[] = [
  { name: 'Start', icon: <svg viewBox="0 0 14 14" className="size-[14px]" fill="#fff"><path d="M0 2l6-1v5.600H0zM7 .9L14 0v6.600H7zM0 7.500h6V13l-6-1zM7 7.500h7V14l-7-1z" /></svg> },
  { name: 'Hledat', icon: <svg viewBox="0 0 14 14" className="size-[14px]" fill="none" stroke="#e8e8e8" strokeWidth="1.200"><circle cx="8.500" cy="5" r="4" /><path d="M5.500 8L.800 13" /></svg> },
  { name: 'Karta', icon: <svg viewBox="0 0 14 10" className="h-[10px] w-[14px]"><path d="M0 0h14v10H0z" fill="#2c8fd6" /><circle cx="4" cy="3.500" r="1.700" fill="#fff" /><path d="M1.500 8.500q2.500-4 5 0z" fill="#fff" /><path d="M8 3h4.500M8 5h4.500" stroke="#fff" /><path d="M8 7h4" stroke="#ffd34a" /></svg> },
  { name: 'Průzkumník', icon: <svg viewBox="0 0 14 12" className="h-3 w-[14px]"><path d="M0 1h5l1 1.500h8V12H0z" fill="#e0a32e" /><path d="M0 4h14v8H0z" fill="#ffdc7d" /><path d="M3 8h8v4H9v-2H5v2H3z" fill="#3d96d8" /></svg> },
  { name: 'Chrome', open: true, icon: <svg viewBox="0 0 14 14" className="size-3"><circle cx="7" cy="7" r="6.500" fill="#f7ca2e" /><path d="M7 .5A6.500 6.500 0 0 1 12.800 4H7L4 8 1.300 3.800A6.500 6.500 0 0 1 7 .5z" fill="#dd4b3e" /><path d="M1.300 3.800L4.500 9l3 .5-2 4A6.500 6.500 0 0 1 1.300 3.800z" fill="#3fa454" /><circle cx="7" cy="7" r="3" fill="#fff" /><circle cx="7" cy="7" r="2.300" fill="#4587ed" /></svg> },
  {
    name: 'Outlook',
    className: 'border-[#ff7b12] bg-[#a5632b]',
    icon: (
      <span className="relative flex h-[13px] w-[15px]">
        <svg viewBox="0 0 15 13" className="absolute inset-0">
          <path d="M8 3h6.500v7H8z" fill="#fff" stroke="#0a6fc4" />
          <path d="M8.500 4l3 3 3-3" fill="none" stroke="#0a6fc4" />
          <path d="M0 1.200L9 0v13L0 11.800z" fill="#0a6fc4" />
        </svg>
        <span className="relative w-[9px] text-center text-[8px] leading-[13px] font-bold text-white">O</span>
      </span>
    ),
  },
  { name: 'Word', open: true, icon: <Tile fill="#2a5699" letter="W" /> },
  { name: 'Excel', open: true, icon: <Tile fill="#1f7145" letter="X" /> },
  { name: 'PowerPoint', icon: <Tile fill="#d24625" letter="P" /> },
  { name: 'Synchronizace', icon: <svg viewBox="0 0 14 13" className="h-[13px] w-[14px]" fill="none" stroke="#55c23c" strokeWidth="2.400"><path d="M1.500 5.500C3 1 9 .800 11 3.500M12.500 7.500C11 12 5 12.200 3 9.500" /><path d="M13.500.500v5h-5zM.500 12.500v-5h5z" fill="#55c23c" stroke="none" /></svg> },
  { name: 'Acrobat', icon: <svg viewBox="0 0 14 13" className="h-[13px] w-[14px]"><path d="M0 0h14v13H0z" fill="#b30b0b" /><path d="M3 10c3-2 4-5 3.800-7C7 7 9 8.500 11.500 8.500 8 7.500 5 8.500 3 10z" fill="none" stroke="#fff" /></svg> },
  { name: 'Mapa', open: true, icon: <svg viewBox="0 0 14 14" className="size-[13px]"><circle cx="7" cy="7" r="6.500" fill="#4a9bdc" /><circle cx="7" cy="7" r="4.200" fill="#e9b95c" /><path d="M7 .500v13M.500 7h13" stroke="#9fd0f2" strokeWidth=".8" /><circle cx="7" cy="7" r="1.500" fill="#f6e3b8" /></svg> },
  { name: 'Kalkulačka', icon: <svg viewBox="0 0 11 13" className="h-[13px] w-[11px]"><path d="M0 0h11v13H0z" fill="#f4f4f4" /><path d="M1.500 1.500h8v2h-8z" fill="#1b292d" /><path d="M2 6h7M2 8.500h7M2 11h7" stroke="#1b292d" strokeWidth="1.300" strokeDasharray="1.600 1" /></svg> },
  { name: 'Hudba', icon: <svg viewBox="0 0 13 13" className="size-[13px]"><rect width="13" height="13" rx="2" fill="#12a8a0" /><circle cx="5.500" cy="8.500" r="2" fill="none" stroke="#fff" strokeWidth="1.200" /><path d="M7.500 8.500V2.500q.5 1.500 2.500 2" fill="none" stroke="#fff" strokeWidth="1.200" /></svg> },
  { name: 'TeamViewer', icon: <svg viewBox="0 0 13 13" className="size-[13px]"><rect width="13" height="13" rx="2" fill="#1779d8" /><circle cx="6.500" cy="6.500" r="5" fill="#fff" /><path d="M1.800 6.500l3-2v1.300h3.400V4.500l3 2-3 2V7.200H4.800v1.300z" fill="#1779d8" /></svg> },
  { name: 'Malování', open: true, icon: <svg viewBox="0 0 14 13" className="h-[13px] w-[14px]"><ellipse cx="6" cy="7.500" rx="5.800" ry="5" fill="#cfe2ee" /><circle cx="3.500" cy="6.500" r="1.200" fill="#d8402f" /><circle cx="6.500" cy="5" r="1.200" fill="#3a7fd0" /><circle cx="4.500" cy="9.500" r="1.200" fill="#3d9e49" /><path d="M10.500 0h2.500l-.3 12h-1.700z" fill="#d98836" /></svg> },
  { name: 'Monitor', icon: <svg viewBox="0 0 14 13" className="h-[13px] w-[14px]"><path d="M0 3h4v9H0zM6 9.500h5V12H6z" fill="#b4bec2" /><path d="M3 .500h10.500v8.500H3z" fill="#f1f6f9" stroke="#b4bec2" /><path d="M4 5h2.500l1-1.500L9 6l1-1h2.500" fill="none" stroke="#3a8fc4" /></svg> },
  { name: 'Terminál', icon: <svg viewBox="0 0 10 9" className="h-[9px] w-[10px]"><path d="M0 0h10v9H0z" fill="#86761a" /><path d="M1 8l8-6" stroke="#5c5313" strokeWidth="1.200" /></svg> },
  { name: 'Výstřižky', icon: <svg viewBox="0 0 14 12" className="h-3 w-[14px]"><ellipse cx="7" cy="5" rx="6.500" ry="4.200" fill="#c93a3f" /><ellipse cx="7.500" cy="4.500" rx="5.300" ry="3" fill="#eceaf0" /><path d="M8 6l5 4.500M12 6l-3 5" stroke="#2b6fb8" strokeWidth="1.400" /></svg> },
  { name: 'Disk', icon: <svg viewBox="0 0 13 13" className="size-3"><circle cx="6.500" cy="6.500" r="6" fill="#5da648" /><path d="M6.500 6.500L1 3.500A6 6 0 0 1 9 1zM6.500 6.500L12 9a6 6 0 0 1-8 3z" fill="#8fbfb4" /><circle cx="6.500" cy="6.500" r="2.200" fill="#e0294f" /></svg> },
  { name: 'Internet Explorer', icon: <svg viewBox="0 0 14 14" className="size-[14px]" fill="none"><path d="M3.500 8h7.800C11.500 2.500 3 2.500 3.500 8c.3 4.500 6 4.500 7.500 1.800" stroke="#4fb4ea" strokeWidth="2.200" /><path d="M1.500 13C-1 10 9-1 12.800.800c1 .7.500 2-.3 3.200" stroke="#f2c230" strokeWidth="1.200" /></svg> },
  { name: 'IKIS', className: 'border-[#76b9ed] bg-[#4a565b]', icon: <LogoIcon className="size-[13px]" /> },
]

function Taskbar() {
  return (
    <div className="flex h-[25px] shrink-0 items-center bg-[#1b2a2e] text-white">
      <div className="grid h-full w-[679px] grid-cols-[repeat(22,1fr)]">
        {tasks.map(t => (
          <button key={t.name} aria-label={t.name} className={`relative flex items-center justify-center ${t.className ? `border-b-2 ${t.className}` : ''}`}>
            {t.icon}
            {t.open && <span className="absolute inset-x-1 bottom-0 h-[2px] bg-[#76b9ed]" />}
          </button>
        ))}
      </div>
      <div className="ml-auto flex h-full items-center">
        <button aria-label="Skryté ikony" className="w-[18px]"><svg viewBox="0 0 10 6" className="h-[6px] w-[10px]" fill="none" stroke="#fff" strokeWidth="1.200"><path d="M.500 5.500L5 1l4.500 4.500" /></svg></button>
        <svg viewBox="0 0 14 10" className="mr-[6px] h-[10px] w-[14px]" fill="none" stroke="#fff"><path d="M4.500 2.500h8v6h-8z" /><path d="M6 4h5v3H6z" fill="#fff" /><path d="M13.500 4v3M1 .5v3h3v-3M2.500 3.500V7H4" /></svg>
        <svg viewBox="0 0 14 13" className="mr-[6px] h-[13px] w-[14px]" fill="none" stroke="#fff"><path d="M3.500 2.500h10v7h-10zM8.500 9.500v3M5 12.500h7M.500.500v3h3v-3M2 3.500v6" /></svg>
        <svg viewBox="0 0 14 12" className="h-3 w-[14px]" fill="none" stroke="#fff"><path d="M.500 4h2L5 1.500v9L2.500 8h-2zM7 4q1.500 2 0 4M9 2.500q2.500 3.500 0 7M11 1q3.500 5 0 10" /></svg>
        <time className="ml-[10px] w-[35px] font-['Open_Sans','Noto_Sans',sans-serif]">8:39</time>
        <svg viewBox="0 0 14 13" className="h-[13px] w-[14px]"><path d="M0 0h14v10H9l-2 3-2-3H0z" fill="#fff" /><path d="M2.500 3h9M2.500 5h9M2.500 7h6" stroke="#1b2a2e" strokeWidth=".9" /></svg>
        <span className="mr-1 ml-4 h-full w-px bg-[#4b5a5e]" />
      </div>
    </div>
  )
}

export default function App() {
  return (
    <div className="relative flex h-screen flex-col overflow-hidden bg-[#fcfaec] font-['DejaVu_Sans_Condensed','DejaVu_Sans',sans-serif] text-[9px] leading-[12px] text-[#1a1a1a]">
      <div className="flex min-h-0 flex-1 flex-col border-r-2 border-[#2f7089]">
        <TitleBar />
        <MenuBar />
        <main className="flex min-h-0 flex-1 flex-col border-t-2 border-r-2 border-l-2 border-t-[#8f8f88] border-r-[#e9e6d2] border-l-[#9a9a94]">
          <Toolbar />
          <h2 className="h-[22px] shrink-0 bg-[#b0c4de] pl-[3px] text-[16px] leading-[23px] font-bold text-[#00008b]">Jízdy techniky</h2>
          <Filters />
          <Grid />
          <Navigator />
          <StatusBar />
        </main>
      </div>
      <Taskbar />
      <TripDialog />
    </div>
  )
}
